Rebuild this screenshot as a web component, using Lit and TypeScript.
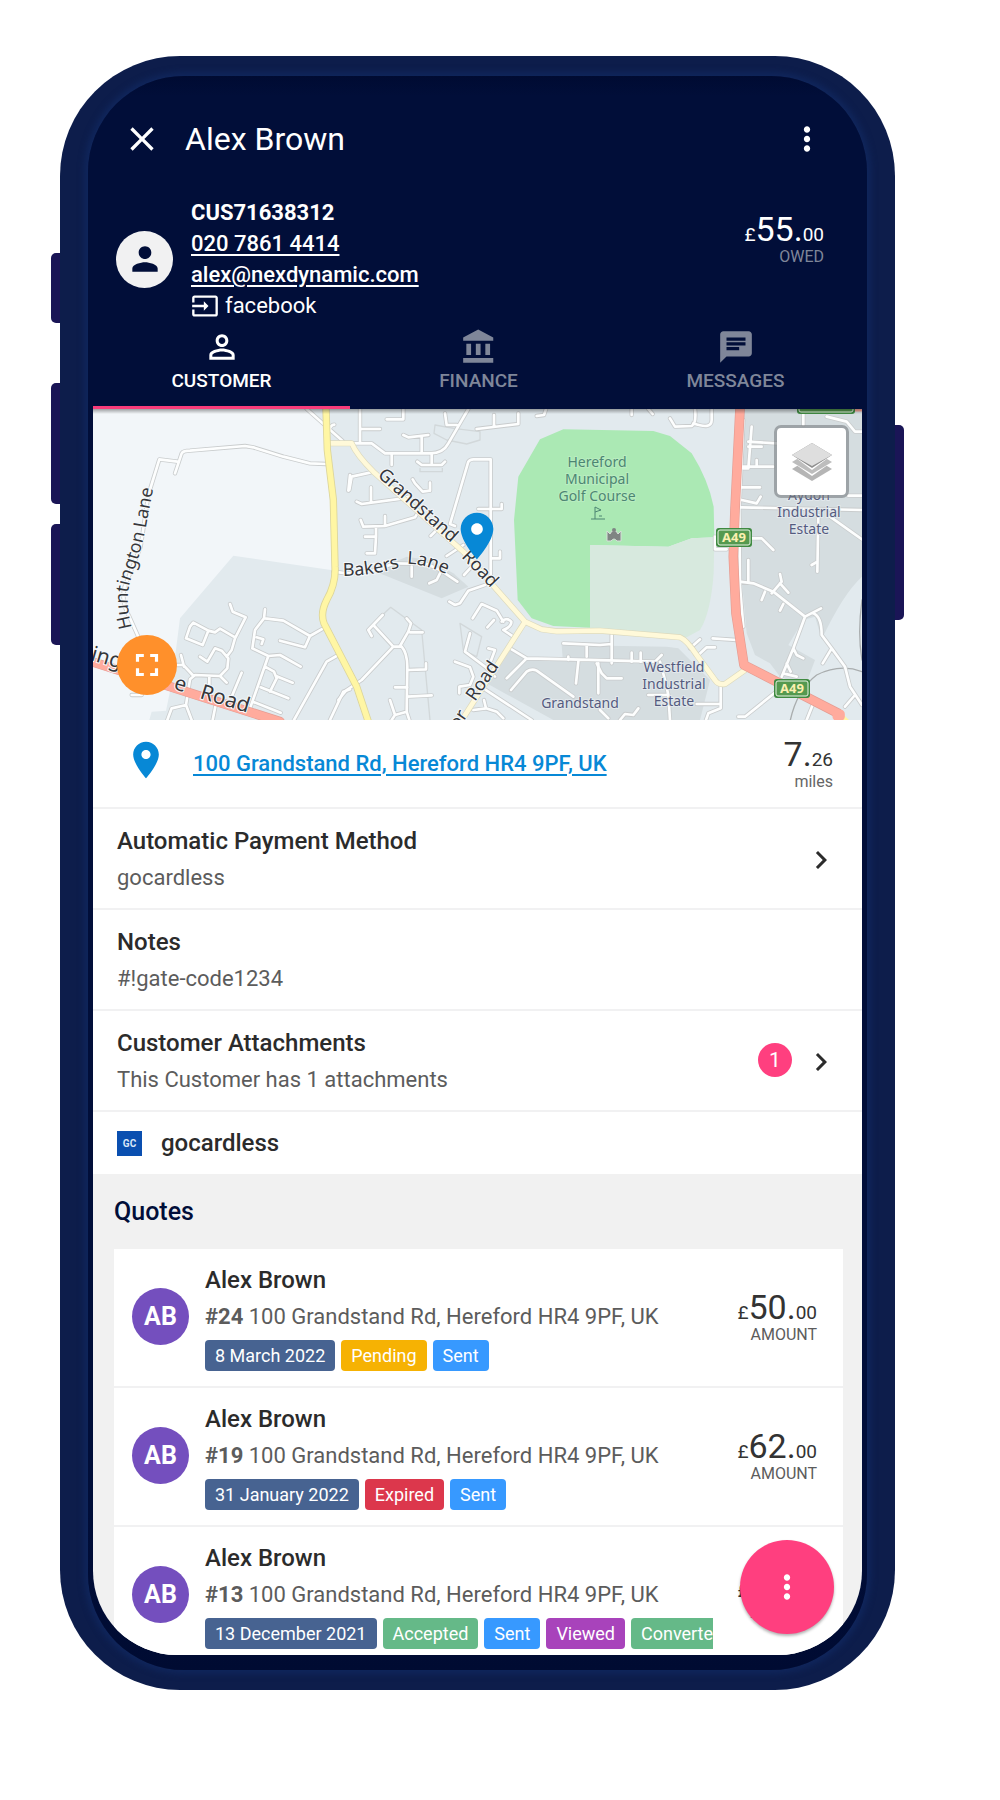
import { LitElement, html, svg, css } from "lit";
import { customElement, state } from "lit/decorators.js";
import { classMap } from "lit/directives/class-map.js";

const ICONS = {
  close: "M19 6.41L17.59 5 12 10.59 6.41 5 5 6.41 10.59 12 5 17.59 6.41 19 12 13.41 17.59 19 19 17.59 13.41 12z",
  more: "M12 8c1.1 0 2-.9 2-2s-.9-2-2-2-2 .9-2 2 .9 2 2 2zm0 2c-1.1 0-2 .9-2 2s.9 2 2 2 2-.9 2-2-.9-2-2-2zm0 6c-1.1 0-2 .9-2 2s.9 2 2 2 2-.9 2-2-.9-2-2-2z",
  person: "M12 12c2.21 0 4-1.79 4-4s-1.79-4-4-4-4 1.79-4 4 1.79 4 4 4zm0 2c-2.67 0-8 1.34-8 4v2h16v-2c0-2.66-5.33-4-8-4z",
  personOutline: "M12 5.9c1.16 0 2.1.94 2.1 2.1s-.94 2.1-2.1 2.1S9.9 9.16 9.9 8s.94-2.1 2.1-2.1m0 9c2.97 0 6.1 1.46 6.1 2.1v1.1H5.9V17c0-.64 3.13-2.1 6.1-2.1M12 4C9.79 4 8 5.79 8 8s1.79 4 4 4 4-1.79 4-4-1.79-4-4-4zm0 9c-2.67 0-8 1.34-8 4v3h16v-3c0-2.66-5.33-4-8-4z",
  input: "M21 3.01H3c-1.1 0-2 .9-2 2V9h2V4.99h18v14.03H3V15H1v4.01c0 1.1.9 1.98 2 1.98h18c1.1 0 2-.88 2-1.98v-14c0-1.11-.9-2-2-2zM11 16l4-4-4-4v3H1v2h10v3z",
  bank: "M4 10v7h3v-7H4zm6 0v7h3v-7h-3zM2 22h19v-3H2v3zm14-12v7h3v-7h-3zm-4.5-9L2 6v2h19V6l-9.5-5z",
  chat: "M20 2H4c-1.1 0-1.99.9-1.99 2L2 22l4-4h14c1.1 0 2-.9 2-2V4c0-1.1-.9-2-2-2zM6 9h12v2H6V9zm8 5H6v-2h8v2zm4-6H6V6h12v2z",
  place: "M12 2C8.13 2 5 5.13 5 9c0 5.25 7 13 7 13s7-7.75 7-13c0-3.87-3.13-7-7-7zm0 9.5c-1.38 0-2.5-1.12-2.5-2.5s1.12-2.5 2.5-2.5 2.5 1.12 2.5 2.5-1.12 2.5-2.5 2.5z",
  chevron: "M10 6L8.59 7.41 13.17 12l-4.58 4.59L10 18l6-6z",
  fullscreen: "M7 14H5v5h5v-2H7v-3zm-2-4h2V7h3V5H5v5zm12 7h-3v2h5v-5h-2v3zM14 5v2h3v3h2V5h-5z",
};

const icon = (name: keyof typeof ICONS, cls: string) => html`
  <svg class="icon ${cls}" viewBox="0 0 24 24" aria-hidden="true"><path d=${ICONS[name]}></path></svg>
`;

/* Street geometry, in three side-by-side sheets of the map drawing. */
const WEST_STREETS =
  "M147 715L118 650Q92 605 104 560L152 440L175 285L208 178L262 185M255 220L275 160Q280 152 300 152L465 138L490 142L580 170L660 190L708 192" +
  "M650 27L757 122M718 90Q722 75 733 74M420 612L428 635L467 652L435 715L425 750L410 770M310 668L355 692L338 735L288 715L300 680Z" +
  "M355 692L375 697L390 686L435 712M330 770L352 785L375 745L395 752L415 775L412 805L390 828L315 825L300 838L288 915L245 925L232 960" +
  "M262 795H280L308 825M358 828V858M390 828L410 848M455 818L425 890M378 910L368 960M288 915L305 960M273 765L282 800" +
  "M525 628L522 655L495 690L487 745L535 768L480 925M525 655L580 662L660 708L700 685M660 708L645 742L570 722" +
  "M535 768L570 765L632 800M500 712L520 718L515 732M525 800L552 815L560 835L540 875M558 828L608 848M512 862L595 895M488 905L572 938" +
  "M745 765L710 785L612 960M780 868L760 875L720 960M780 225L775 272M125 885H155";
const MID_STREETS =
  "M60 27V130M60 87H120M35 130H95L135 160H270Q310 160 325 130L385 27M155 160V195M190 105L205 112L265 105M245 110V158" +
  "M315 40L320 75H350M275 160V190M232 185L245 195H305L315 185M140 58H190V27M410 87L535 72V40M462 45V80M590 48L612 45L618 27" +
  "M90 218L35 230L28 270M93 262V305M50 305L65 312L190 295L205 290M218 238L225 250L248 275L270 272V248" +
  "M62 360L70 380L135 378L225 352L235 335M135 348V378M108 380V410M75 410H108L105 460H80M345 378L330 372L385 185Q390 178 400 178H452V545" +
  "M415 327H485V312M455 475H480V455M272 408L295 385M370 435L320 468M395 500L372 525M435 555L385 572L360 610L345 615L328 605" +
  "M-20 515L20 520L100 512L165 490L260 492L300 510L352 545M215 500V530M300 520L290 540L268 550M398 655L425 612L470 632L490 665M442 682L462 660" +
  "M485 665Q500 650 514 665Q515 680 490 690L520 710M128 645L85 690L95 708M100 675L160 740H185Q202 760 202 800L200 935L165 945L150 900" +
  "M160 740L65 840L20 870L-5 900M200 655L213 670L205 695L180 738M210 697H248M205 810L258 808V790M202 890L275 886M165 862H202M200 935L208 960M165 945L155 960" +
  "M390 700L375 755L435 800L465 830M345 785L390 802L400 830L390 855L358 860V880M445 745L465 750L450 790M430 865L575 960" +
  "M432 900L438 925L400 930M438 925L470 935L490 955M510 745L560 775L690 778L945 785L965 765M560 775L500 835" +
  "M513 870L560 815Q575 805 590 812L700 890M715 785L708 850M670 730L780 735L815 732M815 705V790M740 735V770M775 790V880M685 770V780";
const EAST_STREETS =
  "M95 785V758M122 785V758M-10 790L5 820L20 835H65M180 785L195 840L205 885L210 960M145 885H200M270 745L300 718M295 765L320 742H345" +
  "M338 715L410 720M362 855V925L325 940L318 960M290 912H362M415 950H435L545 862M0 930L25 955M60 960L75 942L100 945L115 925" +
  "M95 27V45M145 27L158 42M210 55L225 80L275 78Q290 70 285 27M280 70Q335 90 335 60V27M455 80L445 205L430 205M445 125L530 130M445 140H485" +
  "M430 200H520M470 180V200M425 262H480M425 300L470 310L482 290M425 322L786 330M745 287H786M655 345L652 515M652 485L635 495" +
  "M690 350L786 418M445 480V545M420 545L460 550L520 575L615 650L663 625M540 522L545 545L515 580M540 550L565 578M495 575L485 600" +
  "M550 612L540 632M640 640Q665 650 665 705L695 745L735 800L750 860L786 915M695 745L668 790M615 650L580 745L545 830" +
  "M580 745L590 765L610 775M560 790L572 815M550 820L590 830M765 885L735 920M640 910L620 960M610 27V75M680 50L740 65L765 95H786" +
  "M430 60L418 330L420 560L430 680M455 415H485L520 450M345 410V448H380";

const BUFF_ROADS = "M-30 130H35Q50 165 100 215L370 455L555 665L605 688L650 694L780 692L1020 712Q1040 720 1070 765L1125 840Q1135 856 1155 852L1215 810M555 665L340 1000";
const YELLOW_ROAD = "M-42 27L-38 150L-20 300L-15 500Q-12 550 -40 600Q-60 640 -48 670L50 860L85 965";
const RED_ROADS = "M1200 27L1185 330L1180 470L1188 640L1212 795L1495 940M-760 780L-180 965";

@customElement("map-view")
export class MapView extends LitElement {
  static styles = css`
    :host { display: block; position: relative; height: 311px; overflow: hidden; background: #e2eaee; font-family: Roboto, sans-serif; }
    .canvas { display: block; width: 100%; height: 100%; }
    .line { fill: none; stroke-linecap: round; stroke-linejoin: round; }
    .case { stroke: #c9cccd; stroke-width: 13; }
    .street { stroke: #fdfefe; stroke-width: 8; }
    .buff-case { stroke: #dcd9bd; stroke-width: 18; }
    .buff { stroke: #fff9d9; stroke-width: 14; }
    .yellow-case { stroke: #dcd59a; stroke-width: 22; }
    .yellow { stroke: #fff6a4; stroke-width: 17; }
    .red-case { stroke: #e59c92; stroke-width: 29; }
    .red { stroke: #ffab9d; stroke-width: 25; }
    .rail { stroke: #a9adae; stroke-width: 4; }
    .outline { stroke: #d2d8da; stroke-width: 4; }
    .rural { fill: #f2f6f9; }
    .industry { fill: #d5dde0; }
    .golf { fill: #abe9b4; }
    .field { fill: #d7e9de; }
    .label { font-family: "Noto Sans", "Open Sans", sans-serif; fill: #35373b; stroke: #f5f8fa; stroke-width: 2px; paint-order: stroke; }
    .road { font-size: 18px; }
    .main-road { font-size: 21px; }
    .place { font-size: 14px; text-anchor: middle; fill: #555b7f; stroke: #e2e8ec; }
    .golf-name { fill: #4d8573; stroke: #b9edc0; }
    .shield { fill: #55994f; stroke: #e8f4e4; stroke-width: 1; }
    .shield-edge { fill: #3f8a41; }
    .shield-text { font-family: "Noto Sans", "Open Sans", sans-serif; font-size: 13px; font-weight: 700; text-anchor: middle; fill: #fbf0b0; }
    .pin { fill: #0788d6; }
    .hole { fill: #fff; }
    .round, .layers { position: absolute; display: grid; place-items: center; padding: 0; cursor: pointer; }
    .round { left: 24px; bottom: 25px; width: 60px; height: 60px; border: 0; border-radius: 50%; background: #ff902b; }
    .layers { right: 13px; top: 16px; width: 75px; height: 73px; border: 3px solid rgba(120, 125, 128, 0.6); border-radius: 7px; background: #fff; background-clip: padding-box; }
    .layers-icon { width: 42px; height: 40px; }
    .icon { display: block; fill: #fff; }
    .i38 { width: 38px; height: 38px; }
    .shade { position: absolute; left: 0; right: 0; top: 0; height: 5px; background: linear-gradient(rgba(0, 0, 0, 0.35), transparent); }
  `;

  private shield(x: number, y: number, w: number, text: string) {
    return svg`
      <rect class="shield-edge" x=${x} y=${y} width=${w} height="19" rx="3"></rect>
      <rect class="shield" x=${x + 2} y=${y + 2} width=${w - 4} height="15" rx="2"></rect>
      <text class="shield-text" x=${x + w / 2} y=${y + 14}>${text}</text>`;
  }

  render() {
    const streets = (cls: string) => svg`
      <path class="line ${cls}" transform="translate(-9 -27)" d=${WEST_STREETS}></path>
      <path class="line ${cls}" transform="translate(741 -27)" d=${MID_STREETS}></path>
      <path class="line ${cls}" transform="translate(1521 -27)" d=${EAST_STREETS}></path>`;
    return html`
      <svg class="canvas" viewBox="0 0 769 311" preserveAspectRatio="xMidYMid slice" role="img" aria-label="Map of Grandstand Road, Hereford">
        <defs>
          <path id="huntington" d="M39 219Q31 190 38 170Q50 138 54 112L63 64"></path>
          <path id="bakers" d="M250 167Q280 167 308 158"></path>
          <path id="lane" d="M314 155Q336 155 362 170"></path>
        </defs>
        <svg width="769" height="311" viewBox="0 0 2307 933">
          <g transform="translate(-9 -27)">
            <path class="rural" d="M9 27H650L712 80V190L738 512L430 467L270 655L245 850L228 932L185 935L178 960H9Z"></path>
          </g>
          <g transform="translate(741 -27)">
            <path class="industry" d="M100 512L200 470L265 480L340 520L385 560L305 595Z"></path>
            <path class="industry" d="M510 750L560 775H668L665 735L980 740L1015 745L1110 840L1080 960H640L440 850Z"></path>
            <path class="industry" d="M1212 27H1566V530Q1510 580 1445 718L1425 650L1390 660L1345 735L1425 780L1395 860L1320 830L1290 790L1245 765L1220 700L1200 480Z"></path>
            <path class="golf" d="M600 118L670 88L940 93L990 108L1055 160Q1105 240 1121 320L1123 412L1055 415L985 440L750 435V683L640 678L575 655L533 600L522 360L535 230Z"></path>
            <path class="field" d="M750 435L985 440L1055 415L1123 412L1121 520Q1112 640 1080 690L1040 712L750 685Z"></path>
            <path class="line outline" d="M285 75L340 85L420 95V120L380 132L320 120L282 100ZM240 205V215H307V205M152 622L90 680M152 622L245 690L270 960M360 670L425 710L410 770L370 750Z"></path>
            <path class="line rail" d="M1350 965Q1370 870 1430 825Q1500 790 1566 815M1566 600Q1552 700 1566 780"></path>
          </g>
          ${streets("case")}${streets("street")}
          <g transform="translate(741 -27)">
            <path class="line buff-case" d=${BUFF_ROADS}></path><path class="line buff" d=${BUFF_ROADS}></path>
            <path class="line yellow-case" d=${YELLOW_ROAD}></path><path class="line yellow" d=${YELLOW_ROAD}></path>
            <path class="line yellow" d="M1500 945L1530 975"></path>
            <path class="line red-case" d=${RED_ROADS}></path><path class="line red" d=${RED_ROADS}></path>
            <path class="line red" d="M1490 942H1502V950H1490Z"></path>
            <path class="line red" d="M1540 22H1570"></path>
          </g>
        </svg>

        <text class="label road"><textPath href="#huntington">Huntington Lane</textPath></text>
        <text class="label road" transform="translate(284 67) rotate(42)">Grandstand</text>
        <text class="label road" transform="translate(368 148) rotate(46)">Road</text>
        <text class="label road"><textPath href="#bakers">Bakers</textPath></text>
        <text class="label road"><textPath href="#lane">Lane</textPath></text>
        <text class="label road" transform="translate(382 293) rotate(-56)">Road</text>
        <text class="label road" transform="translate(365 321) rotate(-56)">or</text>
        <text class="label main-road" transform="translate(-3 251) rotate(16)">ing</text>
        <text class="label main-road" transform="translate(80 280) rotate(16)">e</text>
        <text class="label main-road" transform="translate(106 289) rotate(17)">Road</text>

        <text class="label place golf-name" x="504" y="58">Hereford</text>
        <text class="label place golf-name" x="504" y="75">Municipal</text>
        <text class="label place golf-name" x="504" y="92">Golf Course</text>
        <path d="M498 110H512M502 110V98L508 101L502 103M506 107H509" fill="none" stroke="#4d8573"></path>
        <path d="M514 122l3 3 2-3h4l2 3 3-3v10h-4q-3-4-6 0h-4z" fill="#7f8583" stroke="#d6ddd8"></path>
        <circle cx="521" cy="121" r="2" fill="#7f8583"></circle>
        <text class="label place" x="716" y="91">Aydon</text>
        <text class="label place" x="716" y="108">Industrial</text>
        <text class="label place" x="716" y="125">Estate</text>
        <text class="label place" x="581" y="263">Westfield</text>
        <text class="label place" x="581" y="280">Industrial</text>
        <text class="label place" x="581" y="297">Estate</text>
        <text class="label place" x="487" y="299">Grandstand</text>

        ${this.shield(623, 119, 36, "A49")} ${this.shield(681, 270, 36, "A49")} ${this.shield(704, -14, 58, "A4103")}

        <circle class="hole" cx="384" cy="120" r="8"></circle>
        <svg class="pin" x="356" y="99" width="56" height="56" viewBox="0 0 24 24"><path d=${ICONS.place}></path></svg>
      </svg>
      <div class="shade"></div>
      <button class="layers" aria-label="Map layers">
        <svg class="layers-icon" viewBox="0 0 42 40" aria-hidden="true">
          <path d="M1 27L21 39L41 27L21 15Z" fill="#b5b5b5"></path>
          <path d="M1 20L21 34L41 20L21 8Z" fill="#fff"></path>
          <path d="M1 20L21 32L41 20L21 8Z" fill="#bdbdbd"></path>
          <path d="M1 13L21 28L41 13L21 2Z" fill="#fff"></path>
          <path d="M1 13L21 26L41 13L21 1Z" fill="#8f8f8f"></path>
          <path d="M1 13L21 24L41 13L21 1Z" fill="#dedede"></path>
        </svg>
      </button>
      <button class="round" aria-label="Full screen map">${icon("fullscreen", "i38")}</button>
    `;
  }
}

interface Quote { id: string; whole: string; tags: [string, string][]; }

const QUOTES: Quote[] = [
  { id: "#24", whole: "50.", tags: [["date", "8 March 2022"], ["pending", "Pending"], ["sent", "Sent"]] },
  { id: "#19", whole: "62.", tags: [["date", "31 January 2022"], ["expired", "Expired"], ["sent", "Sent"]] },
  { id: "#13", whole: "50.", tags: [["date", "13 December 2021"], ["accepted", "Accepted"], ["sent", "Sent"], ["viewed", "Viewed"], ["accepted", "Converted"]] },
];

const TABS: { label: string; icon: keyof typeof ICONS }[] = [
  { label: "CUSTOMER", icon: "personOutline" },
  { label: "FINANCE", icon: "bank" },
  { label: "MESSAGES", icon: "chat" },
];

@customElement("app-root")
export class AppRoot extends LitElement {
  @state() private tab = 0;

  static styles = css`
    :host { display: block; background: #fff; font-family: Roboto, sans-serif; color: #2b2b2b; }
    * { box-sizing: border-box; }
    button { font: inherit; color: inherit; border: 0; background: none; padding: 0; cursor: pointer; }
    .stage { padding: 56px 105px 112px 60px; }
    .phone { position: relative; padding: 20px 28px; border-radius: 120px; background: #0d1d4b; }
    .key { position: absolute; width: 9px; background: #1a1556; }
    .left { right: 100%; border-radius: 5px 0 0 5px; height: 121px; }
    .right { left: 100%; top: 369px; height: 195px; border-radius: 0 5px 5px 0; }
    .k1 { top: 197px; height: 70px; }
    .k2 { top: 327px; }
    .k3 { top: 468px; }
    .bezel { padding: 15px 5px; border-radius: 96px; background: linear-gradient(#000b32, #010e39 20px, #010e39 90%, #000b32); box-shadow: 0 0 6px 4px #10265c; }
    .screen { position: relative; overflow: hidden; border-radius: 0 0 84px 84px; }

    .head { color: #fff; }
    .bar { display: flex; align-items: center; gap: 23px; height: 96px; padding: 0 36px 0 29px; }
    .title { flex: 1; margin: 0; font-size: 32px; font-weight: 400; line-height: 40px; }
    .profile { display: flex; gap: 18px; padding: 10px 38px 0 23px; }
    .avatar { flex: none; display: grid; place-items: center; align-self: center; width: 57px; height: 57px; border-radius: 50%; }
    .user { background: #f1f1f2; color: #010e39; }
    .facts { flex: 1; display: flex; flex-direction: column; align-items: flex-start; font-size: 22px; line-height: 31px; }
    .strong { font-weight: 500; }
    .code { font-weight: 700; }
    .facts a { color: inherit; text-underline-offset: 3px; }
    .source { display: flex; align-items: center; gap: 6px; }

    .money { flex: none; text-align: right; font-size: 19px; line-height: 20px; color: #333; }
    .big { font-size: 34px; line-height: 36px; }
    .unit { font-size: 16px; color: #666; }
    .owed { padding-top: 14px; color: #fff; }
    .owed .unit { color: #7f8699; }

    .tabs { display: grid; grid-template-columns: repeat(3, 1fr); margin-right: -2px; }
    .tab { display: flex; flex-direction: column; align-items: center; gap: 1px; height: 88px; padding-top: 7px; border-bottom: 3px solid transparent; color: #7f8699; font-size: 19px; font-weight: 500; line-height: 28px; }
    .tab.on { color: #fff; border-color: #f93c7b; }

    .icon { display: block; flex: none; fill: currentColor; }
    .i28 { width: 28px; height: 28px; }
    .i36 { width: 36px; height: 36px; }
    .i38 { width: 38px; height: 38px; }
    .i40 { width: 40px; height: 40px; }
    .i44 { width: 44px; height: 44px; }

    .row { display: flex; align-items: center; width: 100%; padding: 14px 23px 12px 24px; border-bottom: 2px solid #f1f1f2; background: #fff; text-align: left; }
    .place { gap: 25px; padding: 16px 29px 15px 31px; }
    .marker { color: #0788d6; padding-bottom: 8px; }
    .address { color: #0788d6; font-size: 22px; font-weight: 500; line-height: 28px; text-underline-offset: 3px; }
    .text { flex: 1; min-width: 0; }
    .name { font-size: 24px; font-weight: 500; line-height: 37px; }
    .sub { font-size: 22px; line-height: 36px; color: #5c5c5c; white-space: nowrap; }
    .count { display: grid; place-items: center; width: 34px; height: 34px; margin: 0 11px 4px 0; border-radius: 50%; background: #ff3f7f; color: #fff; font-size: 21px; }
    .brand { gap: 19px; padding: 13px 24px 12px; border: 0; }
    .logo { display: grid; place-items: center; width: 25px; height: 25px; background: #0a4fb0; color: #d9e6f7; font-size: 10px; font-weight: 700; }

    .quotes { padding: 20px 19px 0 21px; background: #f1f1f1; }
    .heading { margin: 0 0 20px; color: #010e39; font-size: 25px; font-weight: 500; line-height: 35px; }
    .list { list-style: none; margin: 0; padding: 0; background: #fff; }
    .quote { display: flex; align-items: center; padding: 13px 26px 15px 18px; border-bottom: 2px solid #f1f1f2; }
    .quote:last-child { padding-bottom: 6px; border: 0; }
    .initials { margin-right: 16px; background: #744fbe; color: #fff; font-size: 25px; font-weight: 700; }
    .quote .money { width: 104px; }
    .quote .unit { color: #5c5c5c; }
    .tags { display: flex; gap: 6px; margin-top: 5px; overflow: hidden; }
    .tag { flex: none; padding: 0 10px; border-radius: 4px; color: #fff; font-size: 18px; line-height: 31px; }
    .date { background: #476391; }
    .pending { background: #f6b203; }
    .sent { background: #3799ff; }
    .expired { background: #dc374c; }
    .accepted { background: #65b988; }
    .viewed { background: #a843bb; }
    .fab { position: absolute; right: 28px; bottom: 21px; display: grid; place-items: center; width: 94px; height: 94px; border-radius: 50%; background: #ff3f7f; color: #fff; box-shadow: 0 2px 3px rgba(0, 0, 0, 0.3); }
  `;

  private amount(sign: string, whole: string, cents: string, unit: string, cls = "") {
    return html`<div class="money ${cls}">
      <div>${sign}<span class="big">${whole}</span>${cents}</div>
      <div class="unit">${unit}</div>
    </div>`;
  }

  render() {
    return html`
      <div class="stage">
        <div class="phone">
          <div class="key left k1"></div>
          <div class="key left k2"></div>
          <div class="key left k3"></div>
          <div class="key right"></div>
          <div class="bezel">
            <div class="screen">
              <header class="head">
                <div class="bar">
                  <button aria-label="Close">${icon("close", "i40")}</button>
                  <h1 class="title">Alex Brown</h1>
                  <button aria-label="More options">${icon("more", "i38")}</button>
                </div>
                <div class="profile">
                  <div class="avatar user">${icon("person", "i38")}</div>
                  <div class="facts">
                    <span class="code">CUS71638312</span>
                    <a class="strong" href="tel:02078614414">020 7861 4414</a>
                    <a class="strong" href="mailto:alex@nexdynamic.com">alex@nexdynamic.com</a>
                    <span class="source">${icon("input", "i28")}facebook</span>
                  </div>
                  ${this.amount("£", "55.", "00", "OWED", "owed")}
                </div>
                <nav class="tabs" role="tablist">
                  ${TABS.map((t, i) => html`
                    <button class=${classMap({ tab: true, on: i === this.tab })} role="tab" aria-selected=${i === this.tab} @click=${() => (this.tab = i)}>
                      ${icon(t.icon, "i38")}${t.label}
                    </button>`)}
                </nav>
              </header>
              <map-view></map-view>
              <div class="row place">
                <span class="marker">${icon("place", "i44")}</span>
                <span class="text"><a class="address" href="#map">100 Grandstand Rd, Hereford HR4 9PF, UK</a></span>
                ${this.amount("", "7.", "26", "miles")}
              </div>
              <button class="row">
                <div class="text"><div class="name">Automatic Payment Method</div><div class="sub">gocardless</div></div>
                ${icon("chevron", "i36")}
              </button>
              <div class="row">
                <div class="text"><div class="name">Notes</div><div class="sub">#!gate-code1234</div></div>
              </div>
              <button class="row">
                <div class="text"><div class="name">Customer Attachments</div><div class="sub">This Customer has 1 attachments</div></div>
                <span class="count">1</span>${icon("chevron", "i36")}
              </button>
              <div class="row brand"><span class="logo">GC</span><span class="name">gocardless</span></div>
              <section class="quotes">
                <h2 class="heading">Quotes</h2>
                <ul class="list">
                  ${QUOTES.map((q) => html`
                    <li class="quote">
                      <div class="avatar initials">AB</div>
                      <div class="text">
                        <div class="name">Alex Brown</div>
                        <div class="sub"><b>${q.id}</b> 100 Grandstand Rd, Hereford HR4 9PF, UK</div>
                        <div class="tags">${q.tags.map(([kind, label]) => html`<span class="tag ${kind}">${label}</span>`)}</div>
                      </div>
                      ${this.amount("£", q.whole, "00", "AMOUNT")}
                    </li>`)}
                </ul>
              </section>
              <button class="fab" aria-label="Actions">${icon("more", "i38")}</button>
            </div>
          </div>
        </div>
      </div>
    `;
  }
}
